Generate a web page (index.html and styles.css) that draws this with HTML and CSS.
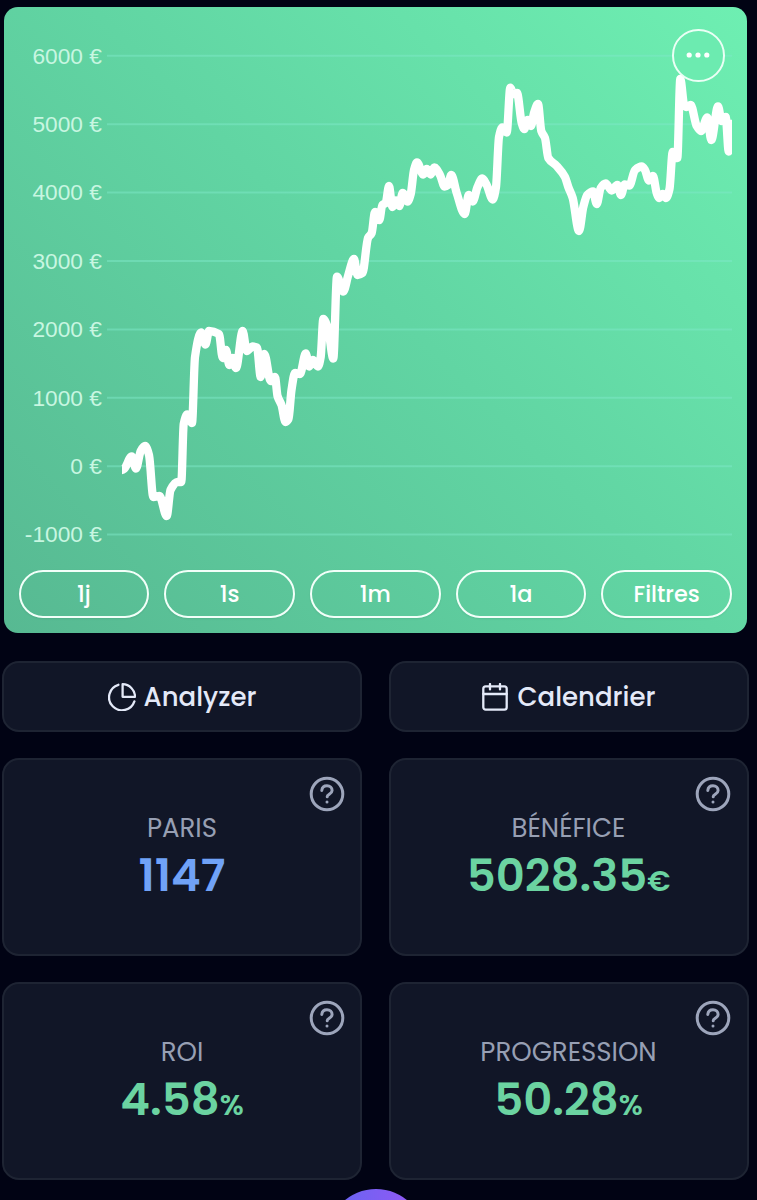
FILE: index.html
```html
<!DOCTYPE html>
<html lang="fr">
<head>
    <meta charset="UTF-8">
    <meta name="viewport" content="width=device-width, initial-scale=1.0">
    <title>Statistiques</title>
    <link rel="stylesheet" href="styles.css">
</head>
<body>
    <main class="dashboard">
        <section class="chart-card">
            <svg class="chart" viewBox="4 7 743 548">
                <g id="chartAxis"></g>
                <clipPath id="plotArea"><rect x="121" y="20" width="611" height="530"/></clipPath>
                <path id="chartLine" class="chart-line" clip-path="url(#plotArea)"/>
            </svg>
            <button class="menu-btn" aria-label="Menu">
                <svg viewBox="0 0 24 24"><circle cx="3.2" cy="12" r="2.6"/><circle cx="12" cy="12" r="2.6"/><circle cx="20.8" cy="12" r="2.6"/></svg>
            </button>
            <div class="periods">
                <button class="period-btn">1j</button>
                <button class="period-btn">1s</button>
                <button class="period-btn">1m</button>
                <button class="period-btn">1a</button>
                <button class="period-btn">Filtres</button>
            </div>
        </section>

        <nav class="actions">
            <button class="action-btn">
                <svg class="action-icon" viewBox="0 0 28 28"><path d="M10.4 1.8A13 13 0 1 0 26.4 18.4"/><path d="M14.6 1.2V13.8H27A12.7 12.7 0 0 0 14.6 1.2Z"/></svg>
                <span>Analyzer</span>
            </button>
            <button class="action-btn">
                <svg class="action-icon" viewBox="0 0 28 28"><rect x="2.3" y="3.4" width="23.4" height="23.2" rx="2.4"/><path d="M2.3 11H25.7M9 1V6.4M19 1V6.4"/></svg>
                <span>Calendrier</span>
            </button>
        </nav>

        <section class="stats">
            <article class="stat-card">
                <svg class="help-icon" viewBox="0 0 36 36"><circle cx="18" cy="18" r="15.8"/><path d="M12.8 14.4C13.2 11 15.4 9.8 18 9.8C21 9.8 23.1 11.8 23.1 14.5C23.1 18 18.2 18.4 18.2 20.7"/><path d="M18 26v.1"/></svg>
                <h2 class="stat-label">PARIS</h2>
                <p class="stat-value blue">1147</p>
            </article>
            <article class="stat-card">
                <svg class="help-icon" viewBox="0 0 36 36"><circle cx="18" cy="18" r="15.8"/><path d="M12.8 14.4C13.2 11 15.4 9.8 18 9.8C21 9.8 23.1 11.8 23.1 14.5C23.1 18 18.2 18.4 18.2 20.7"/><path d="M18 26v.1"/></svg>
                <h2 class="stat-label">BÉNÉFICE</h2>
                <p class="stat-value">5028.35<span class="unit">€</span></p>
            </article>
            <article class="stat-card">
                <svg class="help-icon" viewBox="0 0 36 36"><circle cx="18" cy="18" r="15.8"/><path d="M12.8 14.4C13.2 11 15.4 9.8 18 9.8C21 9.8 23.1 11.8 23.1 14.5C23.1 18 18.2 18.4 18.2 20.7"/><path d="M18 26v.1"/></svg>
                <h2 class="stat-label">ROI</h2>
                <p class="stat-value">4.58<span class="unit">%</span></p>
            </article>
            <article class="stat-card">
                <svg class="help-icon" viewBox="0 0 36 36"><circle cx="18" cy="18" r="15.8"/><path d="M12.8 14.4C13.2 11 15.4 9.8 18 9.8C21 9.8 23.1 11.8 23.1 14.5C23.1 18 18.2 18.4 18.2 20.7"/><path d="M18 26v.1"/></svg>
                <h2 class="stat-label">PROGRESSION</h2>
                <p class="stat-value">50.28<span class="unit">%</span></p>
            </article>
        </section>
    </main>
    <button class="add-btn" aria-label="Ajouter"></button>
    <script src="chart.js"></script>
</body>
</html>
```
FILE: styles.css
```css
/* Base styles */
* {
    box-sizing: border-box;
}

body {
    margin: 0;
    height: 1200px;
    overflow: hidden;
    background: #010314;
    font-family: Poppins, Inter, sans-serif;
}

button {
    padding: 0;
    background: none;
    font-family: inherit;
    cursor: pointer;
}

.dashboard {
    padding: 7px 8.5px 0 2px;
}

/* Chart */
.chart-card {
    position: relative;
    width: 743px;
    height: 626px;
    margin-left: 2px;
    border-radius: 14px;
    background: linear-gradient(45deg, #57b992 0%, #61d5a3 52%, #6eefb2 100%);
}

.chart {
    display: block;
    width: 743px;
    height: 548px;
}

.chart-grid {
    stroke: #7de8c8;
    stroke-opacity: 0.5;
    stroke-width: 2;
}

.chart-label {
    font-family: "Liberation Sans", sans-serif;
    font-size: 22.7px;
    fill: #c8f6e1;
    text-anchor: end;
}

.chart-line {
    fill: none;
    stroke: #fff;
    stroke-width: 8.3;
    stroke-linejoin: round;
}

.menu-btn {
    position: absolute;
    top: 22px;
    right: 22.5px;
    display: flex;
    align-items: center;
    justify-content: center;
    width: 52.5px;
    height: 52.5px;
    border: 2px solid #eafff5;
    border-radius: 50%;
    background: #6cebb0;
}

.menu-btn svg {
    width: 24px;
    height: 24px;
    fill: #fff;
}

.periods {
    display: grid;
    grid-template-columns: repeat(5, 1fr);
    gap: 15px;
    padding: 15px 15px 0 14.5px;
}

.period-btn {
    height: 48px;
    padding-bottom: 1px;
    border: 2px solid #f2fff9;
    border-radius: 25px;
    color: #fff;
    font-size: 22.4px;
    font-weight: 500;
    box-shadow: 0 1px 2px rgba(0,0,0,0.08);
}

/* Action buttons */
.actions,
.stats {
    display: grid;
    grid-template-columns: 1fr 1fr;
    gap: 26px 26.5px;
}

.actions {
    margin: 28px 0 26px;
}

.action-btn {
    display: flex;
    align-items: center;
    justify-content: center;
    gap: 8px;
    height: 71px;
    border: 2px solid #1e2433;
    border-radius: 17px;
    background: #111627;
    color: #e4e9f8;
    font-size: 26px;
    font-weight: 500;
}

.action-btn span {
    padding-top: 2px;
}

.action-icon {
    width: 28px;
    height: 28px;
    fill: none;
    stroke: #e4e9f8;
    stroke-width: 2.3;
    stroke-linecap: round;
    stroke-linejoin: round;
}

/* Stat cards */
.stat-card {
    position: relative;
    height: 198px;
    padding-top: 52px;
    border: 2px solid #1e2433;
    border-radius: 17px;
    background: #111627;
    text-align: center;
}

.help-icon {
    position: absolute;
    top: 16px;
    right: 15.5px;
    width: 36px;
    height: 36px;
    fill: none;
    stroke: #9da5bb;
    stroke-width: 3;
    stroke-linecap: round;
}

.stat-label {
    margin: 0;
    color: #979fb3;
    font-size: 26px;
    font-weight: 400;
    line-height: 32px;
}

.stat-value {
    margin: 0;
    color: #6bd3a1;
    font-size: 45px;
    font-weight: 600;
    line-height: 63px;
}

.stat-value.blue {
    color: #70a2f7;
}

.unit {
    font-size: 29px;
}

/* Floating button */
.add-btn {
    position: fixed;
    top: 1189px;
    left: 326.5px;
    width: 98px;
    height: 98px;
    border: none;
    border-radius: 50%;
    background: linear-gradient(90deg, #6366f1, #9757f5);
}
```
FILE: chart.js
```js
// x, y of each turning point in the plot
const points = [
    [122,470],[124.5,468.5],[131.7,456.5],[136,468.5],[140.7,451],[145,446],[149,455],[153.3,497],[159.5,496],[166.7,516],
    [170.5,490],[177.5,482],[181.3,482],[183.7,424],[187.3,414.5],[192,423],[195,357],[201,332.5],[205.5,344.5],[209,331],
    [219,334],[222.7,358],[226,350],[229.3,365],[232.5,358],[236,368],[242.7,331],[246.7,351],[252.7,346.5],[257,347.5],
    [260.7,377],[264.3,354],[270.7,381],[275,377],[277.5,396],[281.5,405],[285.5,422],[288.5,419],[291.5,390],[295,373],
    [300,374],[305.7,353.5],[309.3,366.5],[312.7,360],[318,366.5],[320.7,357],[323.3,319],[328.3,330],[333.3,358.5],[337,276.7],
    [343.3,291.5],[348.3,275],[354,259],[357.5,275],[362.5,273],[368,238],[371.7,233],[375,212],[379.3,220],[382.3,205],
    [385.7,203],[389,186],[392.3,207],[396,200.5],[399.3,206],[402.7,193],[407.5,201.5],[410.7,194],[414,170],[417,162.5],
    [423.3,174.5],[426.7,169],[430.7,174.5],[434.3,167.5],[440,175],[444.7,186.5],[448,185],[451.3,175],[456.7,193],[464.7,214],
    [468.7,195],[472.7,201.5],[477.5,187],[482.3,178.5],[486.7,185],[492.7,199.5],[496,187],[499,137],[502.3,127.5],[506.7,132.5],
    [510.3,87.7],[513.5,94],[517,93],[521.7,123],[524.3,129],[527.7,120],[531,126],[534,113],[538,104],[541.3,131],
    [545,138],[548.3,158],[556.7,166],[565,177],[568.3,187],[572.7,198],[579,231],[583.3,207],[587.3,195],[593,191.5],
    [596.7,204],[600.7,188],[605.7,183.5],[611.7,190.5],[617.3,185],[621,195],[624.7,184.5],[629.3,185.5],[635,170],[641.7,166.5],
    [645,170],[649,180.5],[653,176],[656.7,193],[659.3,198],[662.7,194],[666,198],[669.5,189],[672.7,152],[677.3,158],
    [680.3,79],[684,104],[686.7,107],[690.7,105],[696.7,126],[701,131],[707.3,117.5],[711.3,140],[718,106.5],[721.7,121],
    [725.7,117],[728.7,151.5],[731,124],[736,124]
];

// smooth curve that never overshoots a point
function linePath(p) {
    const slope = (i) => (p[i + 1][1] - p[i][1]) / (p[i + 1][0] - p[i][0]);
    const tangent = (i) => {
        if (i === 0 || i === p.length - 1) return 0;
        const a = slope(i - 1);
        const b = slope(i);
        return a * b <= 0 ? 0 : 2 * a * b / (a + b);
    };
    let d = `M${p[0]}`;
    for (let i = 0; i < p.length - 1; i++) {
        const h = (p[i + 1][0] - p[i][0]) / 3;
        d += `C${p[i][0] + h},${p[i][1] + h * tangent(i)} ${p[i + 1][0] - h},${p[i + 1][1] - h * tangent(i + 1)} ${p[i + 1]}`;
    }
    return d;
}

let axis = '';
for (let i = 0; i < 8; i++) {
    const y = 55.8 + i * 68.4;
    axis += `<line class="chart-grid" x1="107" x2="732" y1="${y}" y2="${y}"/>`;
    axis += `<text class="chart-label" x="101.8" y="${y + 7.7}">${6000 - i * 1000} €</text>`;
}
document.getElementById('chartAxis').innerHTML = axis;
document.getElementById('chartLine').setAttribute('d', linePath(points));
```
